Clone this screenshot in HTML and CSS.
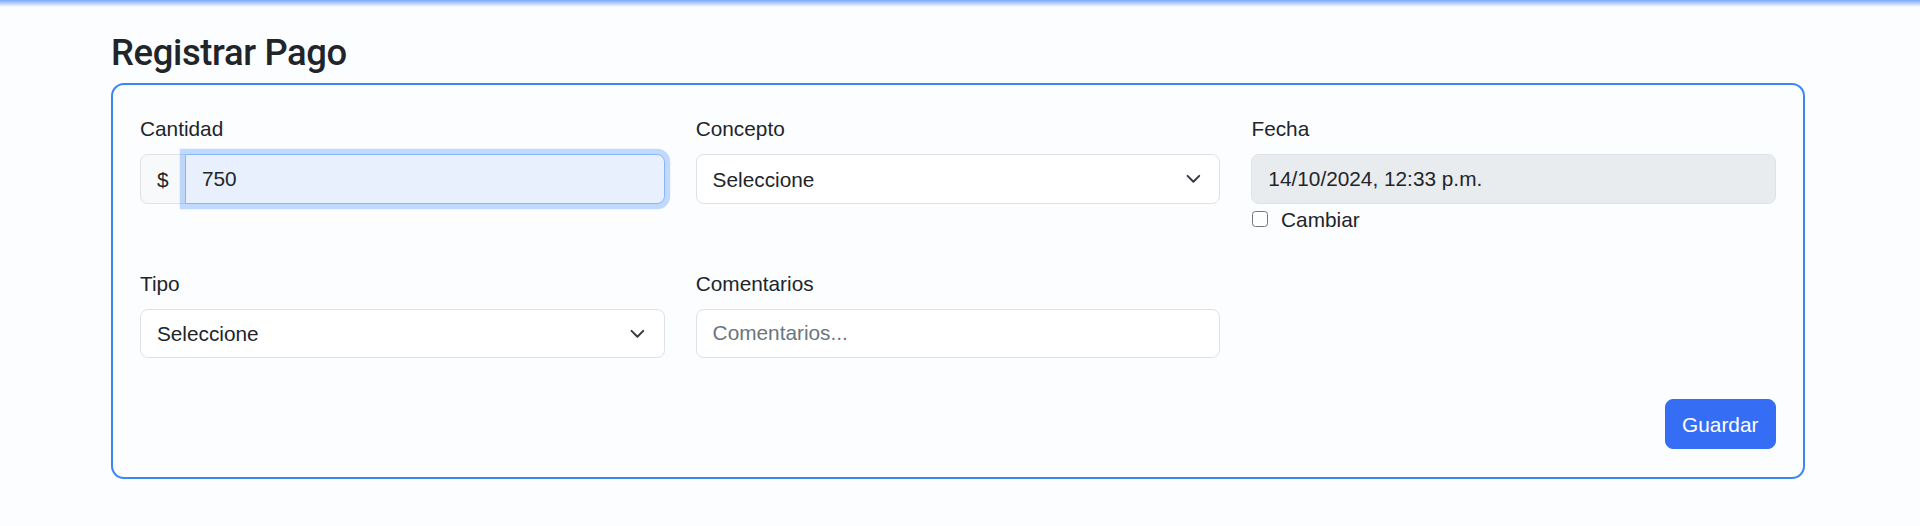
FILE: index.html
```html
<!DOCTYPE html>
<html lang="es">
<head>
<meta charset="utf-8">
<title>Registrar Pago</title>
<link rel="stylesheet" href="styles.css">
</head>
<body>
<div class="topglow"></div>
<main class="container">
  <h3 class="title">Registrar Pago</h3>
  <form class="card">
    <div class="grid">
      <div class="field">
        <label class="label">Cantidad</label>
        <div class="input-group">
          <span class="addon">$</span>
          <input class="control control-focus" type="text" value="750">
        </div>
      </div>
      <div class="field">
        <label class="label">Concepto</label>
        <div class="control select">
          <span>Seleccione</span>
          <svg class="chevron" width="20.8" height="15.6" viewBox="0 0 16 16"><path d="m2 5 6 6 6-6" fill="none" stroke="#343a40" stroke-width="2" stroke-linecap="round" stroke-linejoin="round"/></svg>
        </div>
      </div>
      <div class="field">
        <label class="label">Fecha</label>
        <input class="control control-disabled" type="text" value="14/10/2024, 12:33 p.m." readonly>
        <label class="check"><input class="checkbox" type="checkbox"><span>Cambiar</span></label>
      </div>
      <div class="field">
        <label class="label">Tipo</label>
        <div class="control select">
          <span>Seleccione</span>
          <svg class="chevron" width="20.8" height="15.6" viewBox="0 0 16 16"><path d="m2 5 6 6 6-6" fill="none" stroke="#343a40" stroke-width="2" stroke-linecap="round" stroke-linejoin="round"/></svg>
        </div>
      </div>
      <div class="field">
        <label class="label">Comentarios</label>
        <input class="control" type="text" placeholder="Comentarios...">
      </div>
    </div>
    <div class="actions">
      <button class="btn" type="button">Guardar</button>
    </div>
  </form>
</main>
</body>
</html>
```
FILE: styles.css
```css
* { box-sizing: border-box; }

html, body {
  margin: 0;
  padding: 0;
}

body {
  background: #fcfdff;
  color: #212529;
  font-family: "Liberation Sans", Arial, sans-serif;
  font-size: 20.8px;
  line-height: 31.2px;
}

.topglow {
  height: 7px;
  background: linear-gradient(to bottom, rgba(66, 133, 244, 0.7), rgba(66, 133, 244, 0));
}

.container {
  width: 1805px;
  padding-left: 111px;
}

.title {
  margin: 23.6px 0 8.7px;
  font-family: Roboto, "Liberation Sans", sans-serif;
  font-weight: 500;
  font-size: 36.4px;
  line-height: 43.7px;
  letter-spacing: -0.35px;
  color: #212529;
}

.card {
  margin: 0;
  border: 2px solid #3c85f6;
  border-radius: 13px;
  padding: 28.5px 27px 28px 27px;
  background: #fcfdff;
}

.grid {
  display: grid;
  grid-template-columns: repeat(3, 1fr);
  column-gap: 31.2px;
  row-gap: 32.6px;
  align-items: start;
}

.field {
  display: flex;
  flex-direction: column;
}

.label {
  display: block;
  margin-bottom: 9.8px;
  line-height: 31.2px;
}

.control {
  display: block;
  width: 100%;
  height: 49.4px;
  margin: 0;
  padding: 0 15.6px 0 15.9px;
  border: 1px solid #dee2e6;
  border-radius: 7.8px;
  background: #ffffff;
  color: #212529;
  font-family: "Liberation Sans", Arial, sans-serif;
  font-size: 20.8px;
  line-height: 31.2px;
  outline: none;
}

.control::placeholder {
  color: #6c757d;
  opacity: 1;
}

.select {
  display: flex;
  align-items: center;
}

.chevron {
  margin-left: auto;
  flex: none;
}

.input-group {
  display: flex;
  align-items: stretch;
  width: 100%;
}

.addon {
  display: flex;
  align-items: center;
  flex: none;
  width: 46px;
  height: 49.4px;
  padding: 0 0 0 15.9px;
  border: 1px solid #dee2e6;
  border-radius: 7.8px 0 0 7.8px;
  background: #f8f9fa;
  color: #212529;
}

.input-group .control {
  flex: 1;
  min-width: 0;
  margin-left: -1px;
  border-radius: 0 7.8px 7.8px 0;
}

.control-focus {
  background: #e8f0fe;
  border-color: #86b7fe;
  box-shadow: 0 0 0 5.2px rgba(13, 110, 253, 0.25);
}

.control-disabled {
  background: #e9ecef;
}

.check {
  display: flex;
  align-items: center;
  gap: 13px;
  height: 31.2px;
  padding-left: 0.6px;
}

.checkbox {
  appearance: none;
  -webkit-appearance: none;
  width: 16px;
  height: 16px;
  margin: 0;
  border: 1px solid #767676;
  border-radius: 3.5px;
  background: #ffffff;
  flex: none;
}

.actions {
  display: flex;
  justify-content: flex-end;
  margin-top: 41.4px;
}

.btn {
  height: 49.4px;
  padding: 0 16.6px;
  border: 1px solid #356ef5;
  border-radius: 8px;
  background: #356ef5;
  color: #ffffff;
  font-family: "Liberation Sans", Arial, sans-serif;
  font-size: 20.8px;
  line-height: 31.2px;
}
```
